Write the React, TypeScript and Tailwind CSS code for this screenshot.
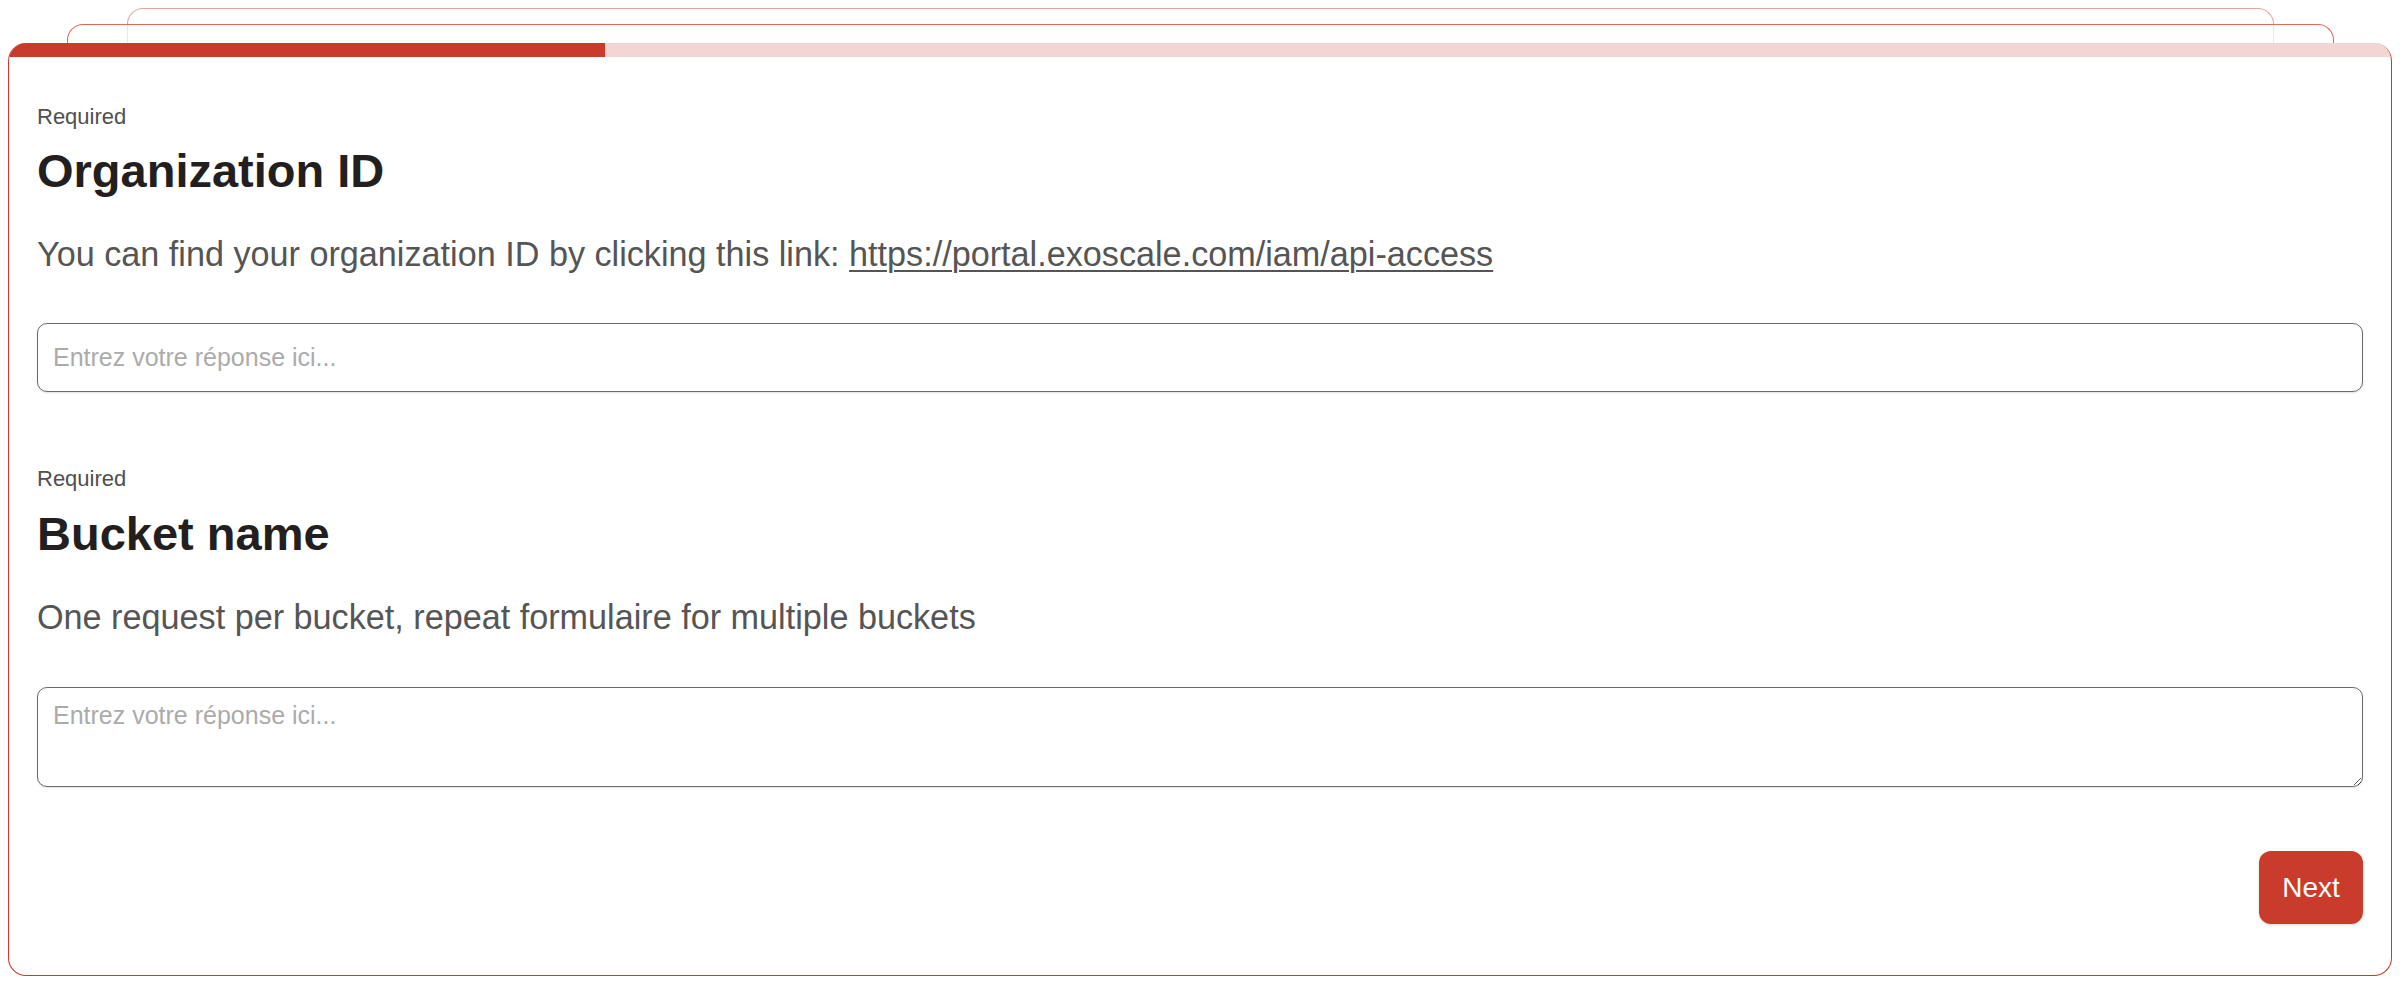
import React from "react";

export default function App() {
  return (
    <div className="min-h-screen bg-white px-2 pt-2 pb-2 font-['Liberation_Sans',Arial,sans-serif]">
      <div className="ml-[119px] mr-[118px] h-[35px] rounded-t-[16px] border border-b-0 border-[#e8a39a]" />
      <div className="-mt-[19px] ml-[59px] mr-[58px] h-[19px] rounded-t-[16px] border border-b-0 border-[#dc6a5c] bg-white/70" />
      <div className="flex h-[933px] flex-col overflow-hidden rounded-[18px] border-[1.5px] border-t-0 border-[#c93a2a] bg-white">
        <div className="flex h-[14px] w-full shrink-0">
          <div className="h-full w-[596px] bg-[#c93c2c]" />
          <div className="h-full flex-1 bg-[#f2d6d4]" />
        </div>
        <div className="flex flex-1 flex-col px-[28px] pt-[47px]">
          <div className="text-[22px] leading-[25px] text-[#4f4f4f]">Required</div>
          <h2 className="mt-[15px] text-[47px] font-bold leading-[54px] text-[#231f20]">Organization ID</h2>
          <p className="mt-[36px] text-[34.2px] leading-[40px] text-[#555555]">
            You can find your organization ID by clicking this link:{" "}
            <a href="#" className="underline decoration-[2px] underline-offset-[4px]">
              https://portal.exoscale.com/iam/api-access
            </a>
          </p>
          <input
            type="text"
            placeholder="Entrez votre réponse ici..."
            className="mt-[49px] h-[69px] w-full rounded-[10px] border border-[#6b6b6b] bg-white px-[15px] text-[25px] text-[#333] shadow-[0_1px_2px_rgba(0,0,0,0.12)] outline-none placeholder:text-[#ababab]"
          />
          <div className="mt-[74px] text-[22px] leading-[25px] text-[#4f4f4f]">Required</div>
          <h2 className="mt-[16px] text-[47px] font-bold leading-[54px] text-[#231f20]">Bucket name</h2>
          <p className="mt-[36px] text-[34.2px] leading-[40px] text-[#555555]">
            One request per bucket, repeat formulaire for multiple buckets
          </p>
          <textarea
            placeholder="Entrez votre réponse ici..."
            className="mt-[50px] block h-[100px] w-full rounded-[10px] border border-[#6b6b6b] bg-white px-[15px] pt-[12px] text-[25px] leading-[30px] text-[#333] shadow-[0_1px_2px_rgba(0,0,0,0.12)] outline-none placeholder:text-[#ababab]"
          />
          <div className="mt-[64px] flex justify-end">
            <button className="h-[73px] w-[104px] rounded-[12px] bg-[#c93c2c] text-[28px] text-white shadow-[0_1px_3px_rgba(0,0,0,0.15)]">
              Next
            </button>
          </div>
        </div>
      </div>
    </div>
  );
}
